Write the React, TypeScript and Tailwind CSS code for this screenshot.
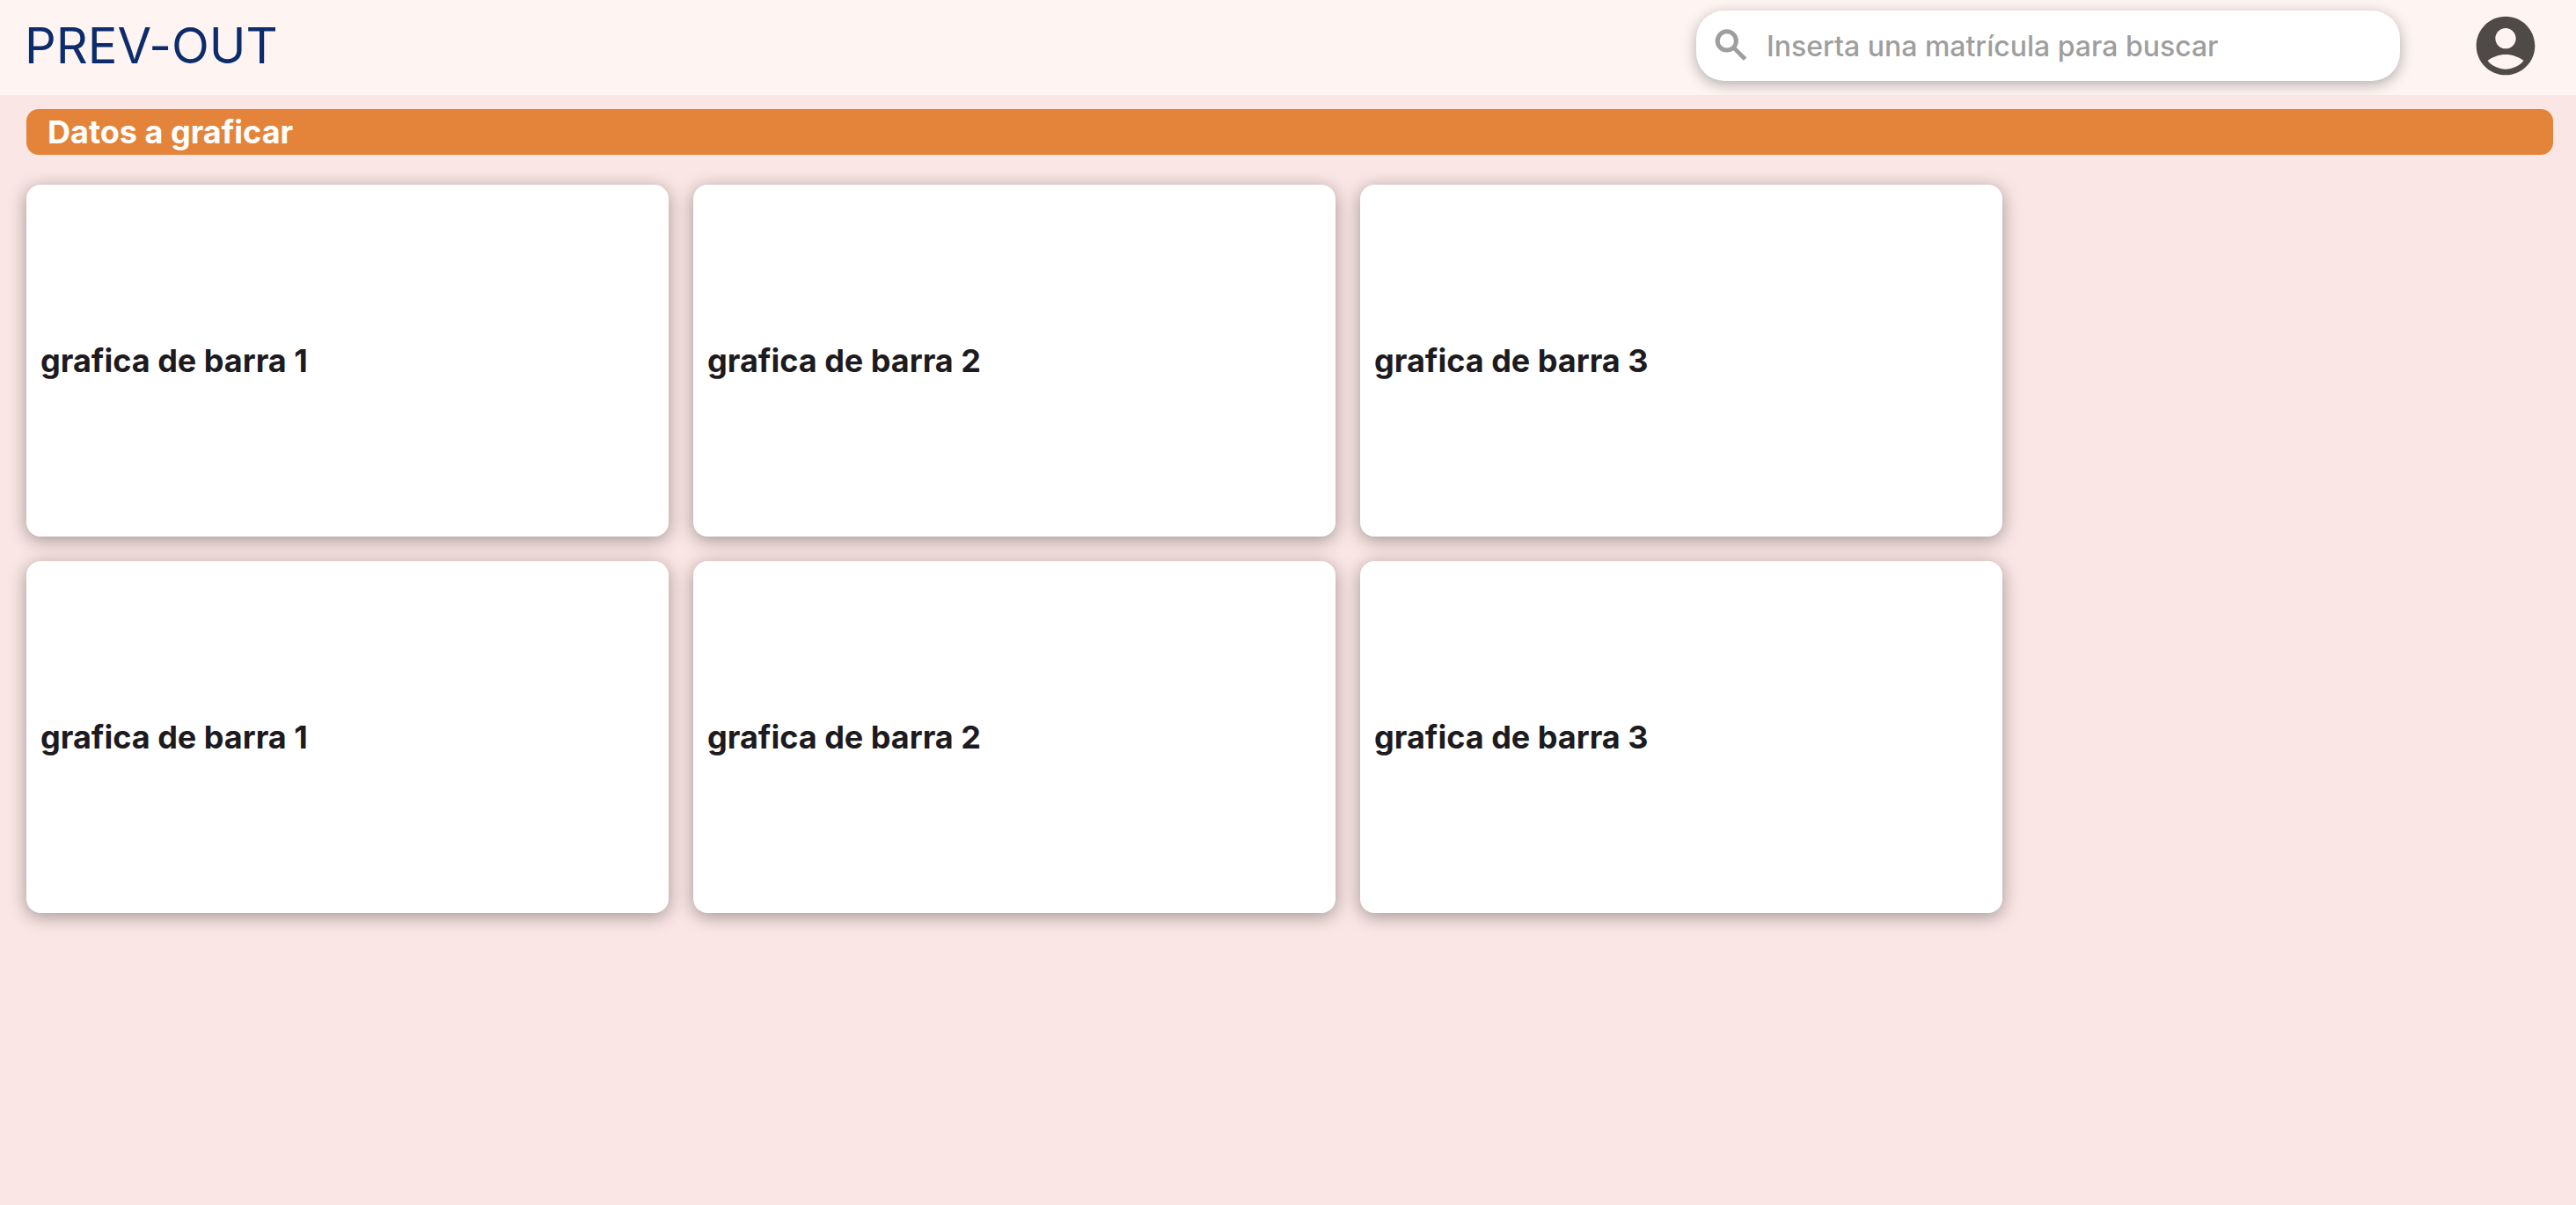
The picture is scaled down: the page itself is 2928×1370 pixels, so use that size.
const rows = [
  ["grafica de barra 1", "grafica de barra 2", "grafica de barra 3"],
  ["grafica de barra 1", "grafica de barra 2", "grafica de barra 3"],
];

function SearchIcon() {
  return (
    <svg viewBox="0 0 24 24" className="size-12 shrink-0" fill="none" stroke="currentColor" aria-hidden="true">
      <circle cx="9.4" cy="9.2" r="5.3" strokeWidth="2.5" />
      <path d="M13.4 13.2l6.4 6.4" strokeWidth="2.4" />
    </svg>
  );
}

function AccountIcon() {
  return (
    <svg viewBox="0 0 24 24" className="size-20" fill="currentColor" aria-hidden="true">
      <path
        fillRule="evenodd"
        d="M12 2C6.48 2 2 6.48 2 12s4.48 10 10 10 10-4.48 10-10S17.52 2 12 2zm0 4c1.93 0 3.5 1.57 3.5 3.5S13.93 13 12 13s-3.5-1.57-3.5-3.5S10.07 6 12 6zm0 14c-2.03 0-4.43-.82-6.14-2.88C7.55 15.8 9.68 15 12 15s4.45.8 6.14 2.12C16.43 19.18 14.03 20 12 20z"
      />
    </svg>
  );
}

function Header() {
  return (
    <header className="flex items-center overflow-hidden bg-[#fef5f3] pt-3 pr-10 pb-4 pl-7">
      <h1 className="mr-auto text-[56px] leading-[80px] text-[#0d2c6b] [font-feature-settings:'calt'_0]">
        PREV-OUT
      </h1>
      <label className="flex h-20 w-[800px] min-w-0 items-center gap-4 rounded-[32px] bg-white px-4 text-[#9e9e9e] shadow-[0_4px_16px_rgba(0,0,0,0.3)]">
        <SearchIcon />
        <input
          type="search"
          aria-label="Buscar matrícula"
          placeholder="Inserta una matrícula para buscar"
          className="h-full min-w-0 grow bg-transparent text-[32px] font-medium text-[#1d1b20] outline-none placeholder:text-[#9e9e9e]"
        />
      </label>
      <button type="button" aria-label="Cuenta" className="ml-20 shrink-0 rounded-full text-[#4f4a48]">
        <AccountIcon />
      </button>
    </header>
  );
}

function ChartCard({ title }: { title: string }) {
  return (
    <article className="flex h-[400px] items-center rounded-2xl bg-white px-4 shadow-[0_4px_20px_rgba(0,0,0,0.36)]">
      <h3 className="text-4xl font-bold text-[#1d1b20]">{title}</h3>
    </article>
  );
}

export default function App() {
  return (
    <div className="min-h-screen bg-[#fae6e4] font-['Inter',sans-serif]">
      <Header />
      <main className="pt-4 pr-[26px] pb-8 pl-[30px]">
        <h2 className="rounded-[14px] bg-[#e4843b] px-6 text-4xl leading-[52px] font-bold text-white">
          Datos a graficar
        </h2>
        <section className="mt-[34px] grid grid-cols-[repeat(3,minmax(0,730px))] gap-7">
          {rows.flatMap((row, r) => row.map((title) => <ChartCard key={`${r}-${title}`} title={title} />))}
        </section>
      </main>
    </div>
  );
}
